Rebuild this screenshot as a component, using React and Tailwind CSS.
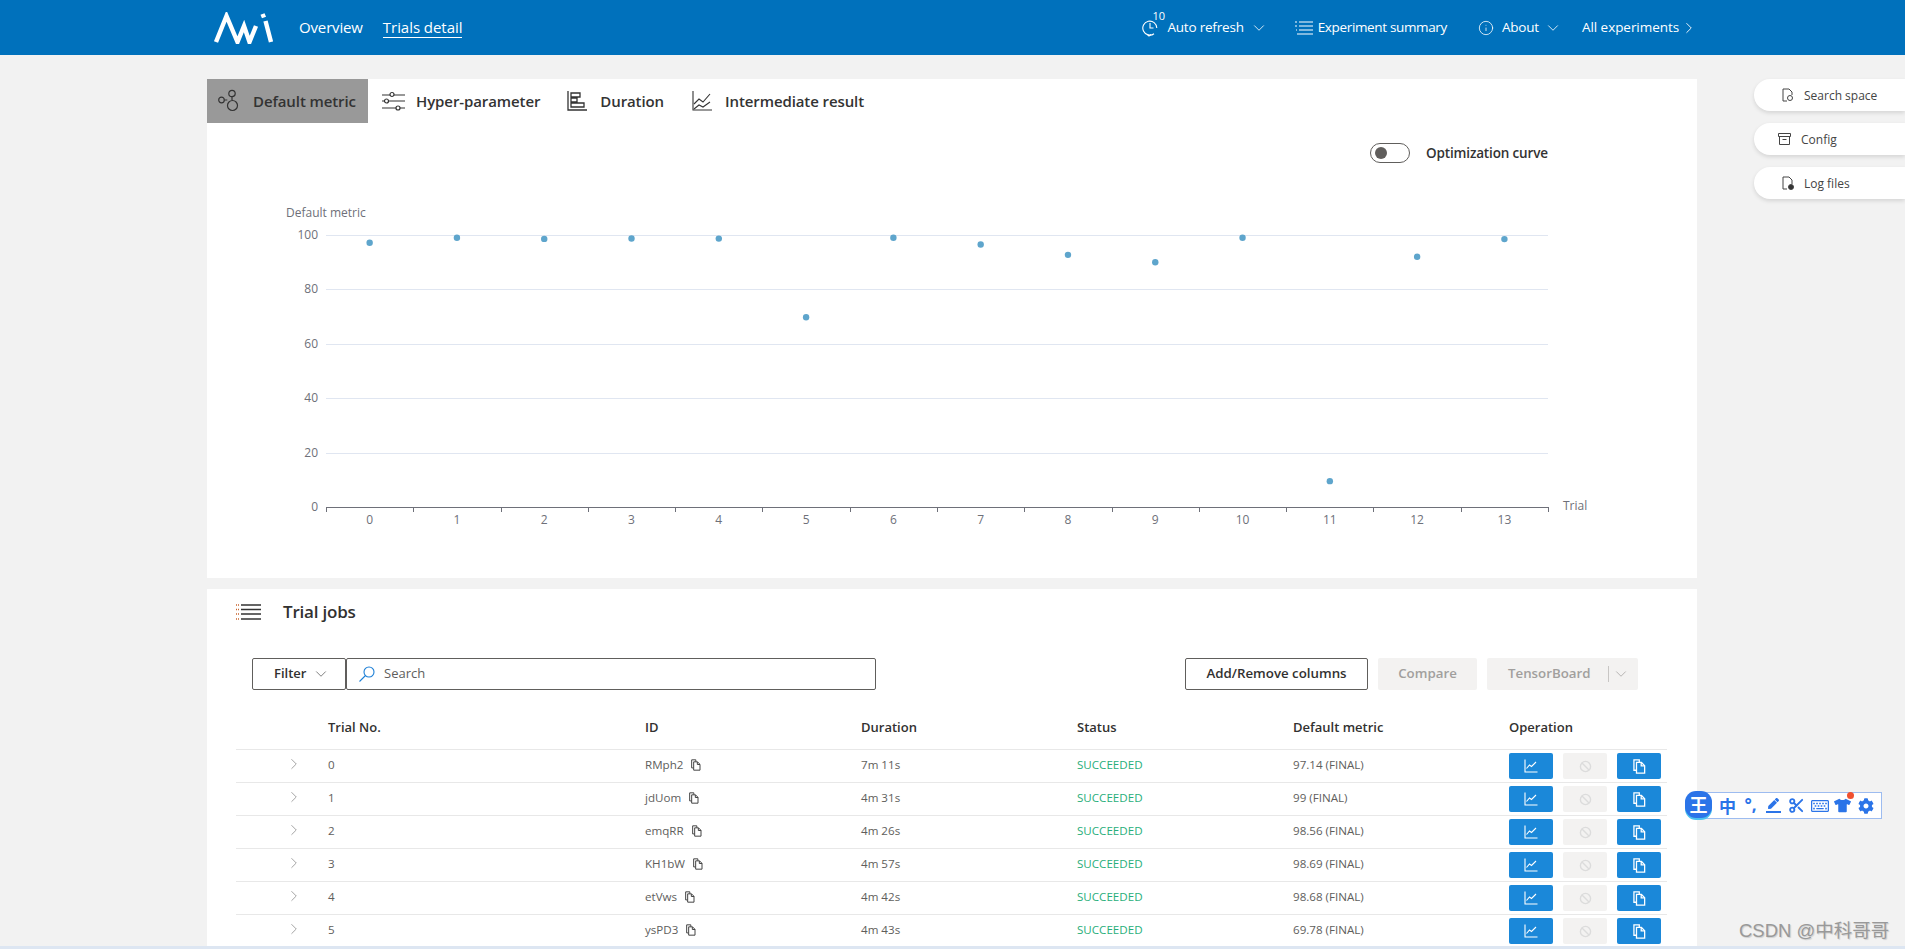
import React from "react";
import { ChevronDown, ChevronRight, Info, Scissors } from "lucide-react";
import { FaTshirt, FaCog, FaRegKeyboard, FaPen } from "react-icons/fa";

const pts = [97.14, 99, 98.56, 98.69, 98.68, 69.78, 99, 96.5, 92.7, 90, 99, 9.5, 92, 98.5];
const rows = [
  ["0", "RMph2", "7m 11s", "97.14 (FINAL)"],
  ["1", "jdUom", "4m 31s", "99 (FINAL)"],
  ["2", "emqRR", "4m 26s", "98.56 (FINAL)"],
  ["3", "KH1bW", "4m 57s", "98.69 (FINAL)"],
  ["4", "etVws", "4m 42s", "98.68 (FINAL)"],
  ["5", "ysPD3", "4m 43s", "69.78 (FINAL)"],
];

function Copy({ className = "w-3 h-3.5" }) {
  return (
    <svg viewBox="0 0 12 14" className={className} fill="none" stroke="currentColor" strokeWidth="1.2">
      <path d="M3 10.5H.8V.8h5V3" />
      <path d="M3.2 3.2h4.600l3 3v7H3.200z" />
      <path d="M7.600 3.200v3.200h3.200" />
    </svg>
  );
}

function ChartIcon() {
  return (
    <svg viewBox="0 0 14 14" className="w-[14px] h-[14px]" fill="none" stroke="white" strokeWidth="1.1">
      <path d="M1 .5v12.500h12.500" />
      <path d="M2.500 9.500 5.500 6l2 1.500L12 3" />
    </svg>
  );
}

function Pill({ icon, label, ml }) {
  return (
    <div className={`h-8 rounded-l-[18px] bg-white shadow-[0_2px_4px_rgba(0,0,0,0.12)] flex items-center text-[12px] text-[#444] ${ml}`}>
      {icon}
      <span className="pt-[2px]">{label}</span>
    </div>
  );
}

const cols = "grid-cols-[92px_317px_216px_216px_216px_216px_158px]";

export default function App() {
  return (
    <div className="relative h-[949px] w-full overflow-hidden bg-[#f2f2f2] text-[#323130] font-['Open_Sans','Noto_Sans',sans-serif]">
      <header className="h-[55px] bg-[#0071bc] text-white flex items-center">
        <svg viewBox="0 0 60 32" className="ml-[213px] w-[60px] h-8" fill="none" stroke="white" strokeWidth="4.4" strokeLinejoin="miter">
          <path d="M3 30 13.500 4l11 26L31 14l5.500 16L43 14" />
          <path d="M49.500 2l1.500 3.500M52.500 9 58 30" />
        </svg>
        <span className="ml-[26px] text-[15px] tracking-[-0.15px]">Overview</span>
        <span className="ml-[20px] text-[15px] tracking-[-0.05px] leading-[19px] border-b border-white">Trials detail</span>
        <div className="ml-[680px] flex items-center text-[13.500px]">
          <div className="relative">
            <svg viewBox="0 0 16 18" className="w-4 h-[18px]" fill="none" stroke="white" strokeWidth="1.1">
              <path d="M12 14.700A7 7 0 1 1 14.800 9" />
              <path d="M8 4v5h3.500" />
              <path d="M5.500 15.500 7 17l2-1.500" />
            </svg>
            <span className="absolute left-[10px] -top-[9px] text-[11px] leading-[12px]">10</span>
          </div>
          <span className="ml-[9px] tracking-[-0.2px]">Auto refresh</span>
          <ChevronDown className="ml-[6px] w-[18px] h-[18px]" strokeWidth={1.1} />
          <svg viewBox="0 0 18 14" className="ml-[27px] w-[18px] h-[14px]" fill="none" stroke="white" strokeWidth="1.1">
            <path d="M0 1h2M4 1h14M0 5h2M4 5h14M1 9h1M4 9h14M2 13h16" />
          </svg>
          <span className="ml-[5px] tracking-[-0.35px]">Experiment summary</span>
          <Info className="ml-[31px] w-4 h-4" strokeWidth={1.2} />
          <span className="ml-2 tracking-[-0.2px]">About</span>
          <ChevronDown className="ml-[5px] w-[18px] h-[18px]" strokeWidth={1.1} />
          <span className="ml-[20px] tracking-[-0.05px]">All experiments</span>
          <ChevronRight className="ml-[1px] w-[18px] h-[18px]" strokeWidth={1.2} />
        </div>
      </header>

      <div className="flex items-start pt-6">
        <div className="ml-[207px] w-[1490px]">
          <section className="h-[499px] bg-white">
            <div className="h-[44px] flex items-center text-[15px] font-semibold text-[#333] tracking-[-0.1px]">
              <div className="w-[161px] h-[44px] bg-[#999999] flex items-center">
                <svg viewBox="0 0 22 24" className="ml-[11px] w-[22px] h-6" fill="none" stroke="#333" strokeWidth="1.2">
                  <circle cx="3.500" cy="11" r="2.800" />
                  <circle cx="14" cy="4.500" r="3.200" />
                  <circle cx="14.500" cy="16.500" r="5" />
                  <path d="M6.300 11 h3 M14 8v3" />
                </svg>
                <span className="ml-[13px]">Default metric</span>
              </div>
              <svg viewBox="0 0 23 20" className="ml-[14px] w-[23px] h-5" fill="none" stroke="#333" strokeWidth="1.200">
                <path d="M0 4h8M12 4h11M0 10h2.500M7 10h16M0 17h14M18 17h5" />
                <circle cx="10" cy="3.500" r="2" />
                <circle cx="4.500" cy="10" r="2" />
                <circle cx="16" cy="17" r="2" />
              </svg>
              <span className="ml-[11px]">Hyper-parameter</span>
              <svg viewBox="0 0 20 20" className="ml-[27px] w-5 h-5" fill="none" stroke="#333" strokeWidth="1.300">
                <path d="M1 0v19h19" />
                <path d="M4 2h9v4H4zM4 7h6v4H4zM4 12h13v4H4z" />
              </svg>
              <span className="ml-[13px]">Duration</span>
              <svg viewBox="0 0 20 20" className="ml-[28px] w-5 h-5" fill="none" stroke="#333" strokeWidth="1.100">
                <path d="M1 0v19h19" />
                <path d="M2 13l5-5 4 3 7-8M2 18l5-4 4 2 7-5" />
              </svg>
              <span className="ml-[13px]">Intermediate result</span>
            </div>

            <div className="mt-5 h-5 flex items-center text-[13.500px] font-semibold text-[#333] tracking-[-0.15px]">
              <div className="ml-[1163px] w-10 h-5 rounded-full border border-[#605e5c] flex items-center pl-1">
                <div className="w-3 h-3 rounded-full bg-[#605e5c]" />
              </div>
              <span className="ml-4">Optimization curve</span>
            </div>

            <svg viewBox="207 163 1490 415" className="block w-[1490px] h-[415px]">
              <text x="286" y="217" fontSize="12" fill="#6e7079">Default metric</text>
              {[0, 20, 40, 60, 80, 100].map((v) => {
                const y = 507 - v * 2.72;
                return (
                  <g key={v}>
                    {v > 0 && <line x1="326" x2="1548" y1={Math.round(y) + 0.5} y2={Math.round(y) + 0.5} stroke="#e0e6f1" />}
                    <text x="318" y={y + 4} fontSize="12" textAnchor="end" fill="#6e7079">{v}</text>
                  </g>
                );
              })}
              <line x1="326" x2="1548" y1="507.500" y2="507.500" stroke="#6e7079" />
              {Array.from({ length: 15 }).map((_, i) => {
                const x = Math.round(326 + i * 87.29) + 0.5;
                return <line key={i} x1={x} x2={x} y1="507" y2="512" stroke="#6e7079" />;
              })}
              {pts.map((v, i) => (
                <g key={i}>
                  <text x={326 + (i + 0.5) * 87.29} y="524" fontSize="12" textAnchor="middle" fill="#6e7079">{i}</text>
                  <circle cx={326 + (i + 0.5) * 87.29} cy={507 - v * 2.72} r="3.200" fill="#5ea5cc" />
                </g>
              ))}
              <text x="1563" y="510" fontSize="12" fill="#6e7079">Trial</text>
            </svg>
          </section>

          <section className="mt-[11px] h-[357px] bg-white">
            <div className="h-[46px] flex items-center pl-[29px]">
              <svg viewBox="0 0 25 16" className="w-[25px] h-4" fill="none" strokeWidth="1.300">
                <path d="M0 1h3M0 5.500h3M0 10h3M0 15h3" stroke="#c8642e" strokeDasharray="1 1" />
                <path d="M5 1h20M5 5.500h20M5 10h20M5 15h20" stroke="#333" />
              </svg>
              <span className="ml-[22px] text-[17px] font-semibold tracking-[-0.2px]">Trial jobs</span>
            </div>

            <div className="mt-[23px] flex items-center">
              <div className="ml-[45px] w-[94px] h-8 border border-[#605e5c] rounded-[2px] flex items-center pl-[21px] text-[13px] font-semibold">
                Filter
                <ChevronDown className="ml-[6px] w-[18px] h-[18px] text-[#555]" strokeWidth={1} />
              </div>
              <div className="w-[530px] h-8 border border-[#605e5c] rounded-[2px] flex items-center pl-3 text-[13px] text-[#605e5c]">
                <svg viewBox="0 0 16 16" className="w-4 h-4" fill="none" stroke="#1d7fd6" strokeWidth="1.100">
                  <circle cx="10" cy="6" r="5" />
                  <path d="M6.500 9.500.5 15.500" />
                </svg>
                <span className="ml-[9px]">Search</span>
              </div>
              <div className="ml-[309px] w-[183px] h-8 border border-[#605e5c] rounded-[2px] flex items-center justify-center text-[13.300px] font-semibold">
                Add/Remove columns
              </div>
              <div className="ml-[10px] w-[99px] h-8 bg-[#f3f2f1] rounded-[2px] flex items-center justify-center text-[13.300px] font-semibold text-[#a19f9d]">
                Compare
              </div>
              <div className="ml-[10px] w-[151px] h-8 bg-[#f3f2f1] rounded-[2px] flex items-center text-[13.300px] font-semibold text-[#a19f9d]">
                <span className="ml-[21px]">TensorBoard</span>
                <span className="ml-[17px] w-px h-4 bg-[#c8c6c4]" />
                <ChevronDown className="ml-[3px] w-[18px] h-[18px]" strokeWidth={1} />
              </div>
            </div>

            <div className="mt-[21px] ml-[29px] w-[1431px] text-[13px] font-semibold">
              <div className={`h-[38px] pb-[4px] grid ${cols} items-center`}>
                <span />
                <span>Trial No.</span>
                <span>ID</span>
                <span>Duration</span>
                <span>Status</span>
                <span>Default metric</span>
                <span>Operation</span>
              </div>
              {rows.map((r) => (
                <div key={r[0]} className={`h-[33px] border-t border-[#e8e8e8] grid ${cols} items-center text-[11.600px] font-normal text-[#605e5c]`}>
                  <span className="pl-[49px]">
                    <ChevronRight className="w-[18px] h-[18px] -mt-[5px] text-[#777]" strokeWidth={0.9} />
                  </span>
                  <span className="pb-[2px]">{r[0]}</span>
                  <span className="flex items-center pb-[2px]">
                    {r[1]}
                    <Copy className="ml-2 w-[10px] h-3 text-[#444]" />
                  </span>
                  <span className="pb-[2px]">{r[2]}</span>
                  <span className="pb-[2px] text-[#27ae7a]">SUCCEEDED</span>
                  <span className="pb-[2px]">{r[3]}</span>
                  <span className="flex gap-[10px]">
                    <span className="w-11 h-[26px] rounded-[2px] bg-[#1b88d9] flex items-center justify-center"><ChartIcon /></span>
                    <span className="w-11 h-[26px] rounded-[2px] bg-[#f3f2f1] flex items-center justify-center">
                      <svg viewBox="0 0 14 14" className="w-[13px] h-[13px]" fill="none" stroke="#dcdcdc" strokeWidth="1.500">
                        <circle cx="7" cy="7" r="5.500" />
                        <path d="M3 3l8 8" />
                      </svg>
                    </span>
                    <span className="w-11 h-[26px] rounded-[2px] bg-[#1b88d9] flex items-center justify-center text-white">
                      <Copy className="w-[13px] h-[15px]" />
                    </span>
                  </span>
                </div>
              ))}
            </div>
          </section>
        </div>

        <div className="ml-[57px] flex-1 flex flex-col gap-3">
          <Pill
            label="Search space"
            ml="pl-[28px]"
            icon={
              <svg viewBox="0 0 12 14" className="w-3 h-[14px] mr-[10px]" fill="none" stroke="#444" strokeWidth="1">
                <path d="M5 13H1V1h6l3 3v3" />
                <circle cx="8" cy="10" r="2.500" />
              </svg>
            }
          />
          <Pill
            label="Config"
            ml="pl-[24px]"
            icon={
              <svg viewBox="0 0 13 12" className="w-[13px] h-3 mr-[10px]" fill="none" stroke="#444" strokeWidth="1">
                <path d="M.5.500h12v3H.5zM1.500 3.500v8h10v-8M4.500 6.500h4" />
              </svg>
            }
          />
          <Pill
            label="Log files"
            ml="pl-[28px]"
            icon={
              <svg viewBox="0 0 12 14" className="w-3 h-[14px] mr-[10px]" fill="none" stroke="#444" strokeWidth="1">
                <path d="M5 13H1V1h6l3 3v4" />
                <circle cx="9" cy="11" r="2.500" fill="#333" />
              </svg>
            }
          />
        </div>
      </div>

      <div className="absolute inset-x-0 bottom-0 h-[3px] bg-[#dde6f2]" />

      <div className="absolute left-[1697px] top-[792px] w-[185px] h-[27px] bg-white border border-[#9dbcf0] flex items-center pl-[18px] text-[#2b74e8]">
        <span className="w-[23px] flex justify-center text-[17px] font-bold leading-none font-['Noto_Sans_CJK_SC',sans-serif]">中</span>
        <span className="w-[23px] flex justify-center text-[17px] font-bold leading-none pb-[3px]">°,</span>
        <span className="w-[23px] flex justify-center">
          <span className="w-[15px] pb-[2px] border-b-2 border-[#2b74e8] flex justify-center"><FaPen className="w-[11px] h-[11px]" /></span>
        </span>
        <span className="w-[23px] flex justify-center"><Scissors className="w-[17px] h-[17px]" strokeWidth={2.6} /></span>
        <span className="w-[23px] flex justify-center"><FaRegKeyboard className="w-[18px] h-[18px]" /></span>
        <span className="w-[23px] flex justify-center relative">
          <FaTshirt className="w-[17px] h-[17px]" />
          <span className="absolute right-[0px] -top-[5px] w-[7px] h-[7px] rounded-full bg-[#f0502f]" />
        </span>
        <span className="w-[23px] flex justify-center"><FaCog className="w-[16px] h-[16px]" /></span>
      </div>
      <div className="absolute left-[1685px] top-[791px] w-[27px] h-[27px] rounded-[11px] bg-[#2b74e8] text-white flex items-center justify-center text-[18px] font-bold font-['Noto_Sans_CJK_SC',sans-serif] shadow-[0_2px_0_#4cc3f0]">
        王
      </div>

      <div className="absolute left-[1739px] top-[919px] text-[18.500px] leading-[24px] text-[#999] [text-shadow:1px_1px_1px_rgba(0,0,0,0.15)] font-['Liberation_Sans','Noto_Sans_CJK_SC',sans-serif]">
        CSDN @中科哥哥
      </div>
    </div>
  );
}
